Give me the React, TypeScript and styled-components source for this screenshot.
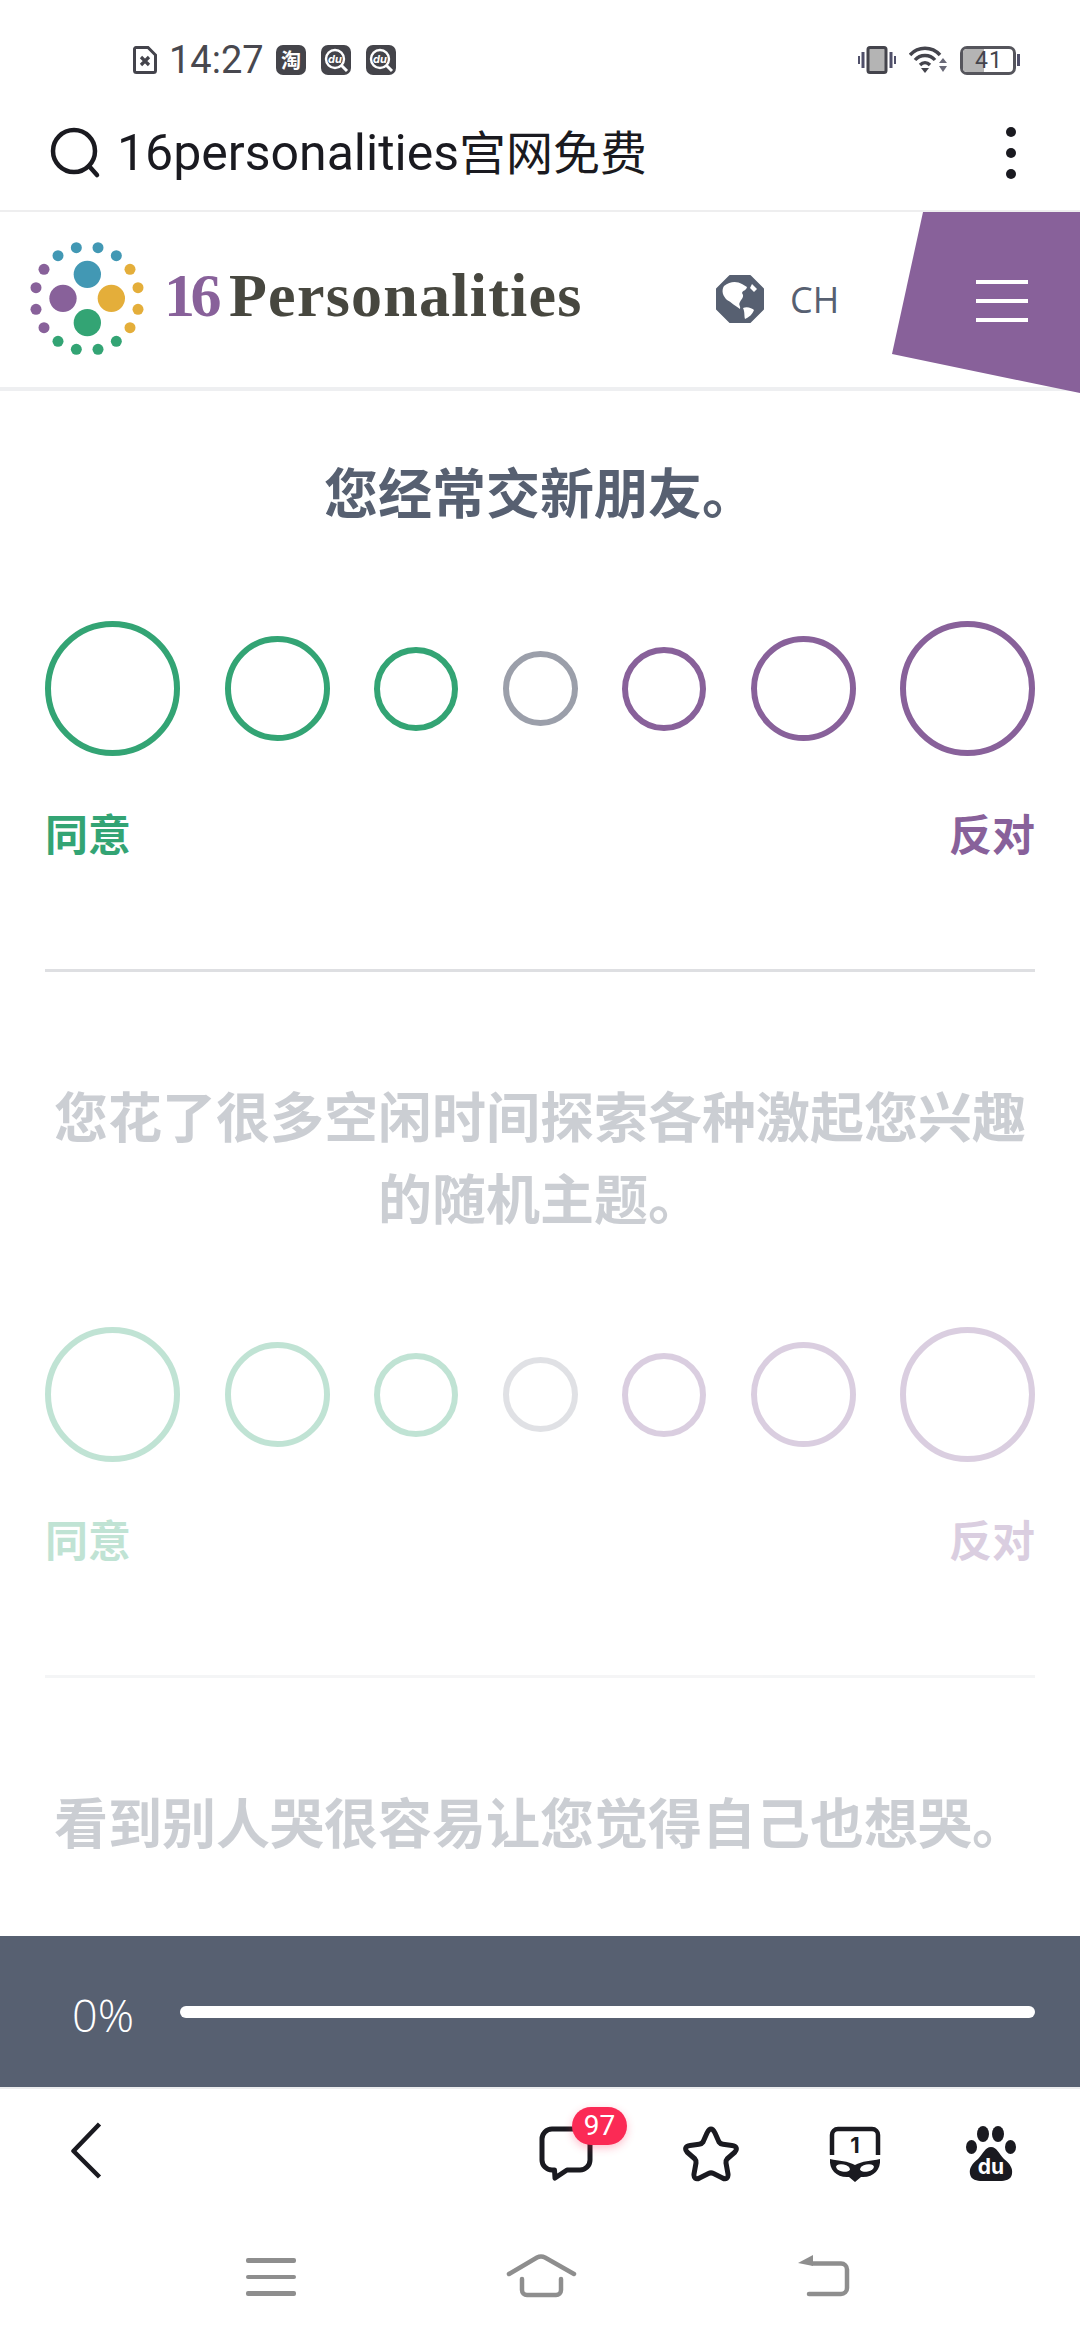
import styled, { createGlobalStyle } from 'styled-components'

const GREEN = '#33a474'
const PURPLE = '#88619a'
const NEUTRAL = '#9b9faa'
const SLATE = '#576071'
const INK = '#1a1a20'

const GlobalStyle = createGlobalStyle`
  html, body {
    margin: 0;
    padding: 0;
    background: #fff;
  }
  body {
    font-family: Inter, "Noto Sans CJK SC", sans-serif;
  }
  * {
    box-sizing: border-box;
  }
`

type CircleSpec = { size: number; color: string }

const scale: CircleSpec[] = [
  { size: 135, color: GREEN },
  { size: 105, color: GREEN },
  { size: 84, color: GREEN },
  { size: 75, color: NEUTRAL },
  { size: 84, color: PURPLE },
  { size: 105, color: PURPLE },
  { size: 135, color: PURPLE },
]

const questions = [
  { text: '您经常交新朋友。', faded: false, last: false },
  { text: '您花了很多空闲时间探索各种激起您兴趣的随机主题。', faded: true, last: false },
  { text: '看到别人哭很容易让您觉得自己也想哭。', faded: true, last: true },
]

const logoDots = [
  { c: '#4298b4', at: [[197, 82], [262, 82], [142, 106], [317, 106]] },
  { c: '#e4ae3a', at: [[358, 147], [382, 202], [382, 267], [358, 322]] },
  { c: GREEN, at: [[317, 363], [262, 387], [197, 387], [142, 363]] },
  { c: PURPLE, at: [[100, 322], [76, 267], [76, 202], [100, 147]] },
]

function Logo() {
  return (
    <LogoWrap>
      <svg width="124" height="124" viewBox="40 50 372 372">
        {logoDots.map((g) =>
          g.at.map(([x, y]) => <circle key={`${x}-${y}`} cx={x} cy={y} r="16.5" fill={g.c} />),
        )}
        <circle cx="230" cy="162" r="41" fill="#4298b4" />
        <circle cx="157" cy="234" r="41" fill={PURPLE} />
        <circle cx="302" cy="234" r="41" fill="#e4ae3a" />
        <circle cx="230" cy="307" r="41" fill={GREEN} />
      </svg>
      <Wordmark>
        <WordNumber>16</WordNumber>
        <WordName>Personalities</WordName>
      </Wordmark>
    </LogoWrap>
  )
}

function Globe() {
  return (
    <svg width="48" height="48" viewBox="0 0 48 48">
      <path d="M14 1 H34 L47 14 V34 L34 47 H14 L1 34 V14 Z" fill={SLATE} stroke={SLATE} strokeWidth="2" strokeLinejoin="round" />
      <path
        d="M8 11 C14 6 21 6 26 9 L31 12 C30 16 27 15 26 18 C29 22 25 24 24 27 C22 30 25 31 24 34 C19 31 15 27 11 25 C7 21 5 16 8 11 Z"
        fill="#fff"
      />
      <path d="M27 33 C31 31 36 33 38 35 C36 40 33 42 29 44 C28 41 29 37 27 33 Z" fill="#fff" />
      <path d="M36 9 L41 14 L38 17 L34 13 Z" fill="#fff" />
    </svg>
  )
}

function SearchIcon() {
  return (
    <svg width="52" height="52" viewBox="0 0 52 52" fill="none" stroke={INK} strokeWidth="4.5" strokeLinecap="round">
      <circle cx="24" cy="24" r="21" />
      <path d="M39 39 L47 48" />
    </svg>
  )
}

function SimIcon() {
  return (
    <svg width="24" height="28" viewBox="0 0 24 28" fill="none">
      <path d="M3 1.5 H15 L22.5 9 V24.5 A2 2 0 0 1 20.5 26.5 H3.5 A2 2 0 0 1 1.5 24.5 V3 A1.5 1.5 0 0 1 3 1.5 Z" stroke="#44444c" strokeWidth="3" />
      <path d="M8 11 L16 19 M16 11 L8 19" stroke="#44444c" strokeWidth="3.2" />
    </svg>
  )
}

function DuBadge() {
  return (
    <AppBadge>
      <svg width="30" height="30" viewBox="0 0 30 30">
        <circle cx="14" cy="14" r="9" fill="none" stroke="#fff" strokeWidth="2.4" />
        <path d="M20 20 L26 26" stroke="#fff" strokeWidth="3" />
        <text x="14" y="18" textAnchor="middle" fontSize="11" fontStyle="italic" fontFamily="Inter, sans-serif" fill="#fff">
          du
        </text>
      </svg>
    </AppBadge>
  )
}

function VibrateIcon() {
  return (
    <svg width="38" height="28" viewBox="0 0 38 28">
      <rect x="10" y="1.5" width="18" height="25" rx="2" fill="#b4b4b4" stroke="#44444c" strokeWidth="3" />
      <path d="M5 6 V22 M33 6 V22" stroke="#50506a" strokeWidth="3" />
      <path d="M1 10 V18 M37 10 V18" stroke="#50506a" strokeWidth="2" />
    </svg>
  )
}

function WifiIcon() {
  return (
    <svg width="38" height="28" viewBox="0 0 38 28" fill="none" stroke="#44444c" strokeWidth="3.4">
      <path d="M1 9 C9 0 23 0 31 9" />
      <path d="M6 14 C11 8 21 8 26 14" />
      <path d="M11 19 C14 16 18 16 21 19" />
      <path d="M12 22 H20 L16 27 Z" fill="#44444c" stroke="none" />
      <path d="M30 17 L34 12 L38 17 Z M30 20 H38 L34 26 Z" fill="#6a6a78" stroke="none" />
    </svg>
  )
}

function Battery() {
  return (
    <BatteryBody>
      <BatteryCase>
        <BatteryFill />
        <BatteryLevel>41</BatteryLevel>
      </BatteryCase>
      <BatteryTip />
    </BatteryBody>
  )
}

function ChatIcon() {
  return (
    <svg width="54" height="56" viewBox="0 0 54 56" fill="none" stroke={INK} strokeWidth="5" strokeLinejoin="round">
      <path d="M13 3 H41 A10 10 0 0 1 51 13 V34 A10 10 0 0 1 41 44 H28 L16 52 L15.500 44 H13 A10 10 0 0 1 3 34 V13 A10 10 0 0 1 13 3 Z" />
    </svg>
  )
}

function StarIcon() {
  return (
    <svg width="56" height="56" viewBox="0 0 56 56" fill="none" stroke={INK} strokeWidth="5" strokeLinejoin="round">
      <path d="M28 3 C30 3 31 5 32 7 L36 16 C37 17.500 38 18 40 18.300 L49 19.500 C53.500 20 54.500 23 52 26 L44 33 C43 34 43 35.500 43 37 L45 48 C45.500 52 43 54 39.500 52 L30.500 47.500 C28.500 46.500 27.500 46.500 25.500 47.500 L16.500 52 C13 54 10.500 52 11 48 L13 37 C13 35.500 13 34 12 33 L4 26 C1.500 23 2.500 20 7 19.500 L16 18.300 C18 18 19 17.500 20 16 L24 7 C25 5 26 3 28 3 Z" />
    </svg>
  )
}

function IncognitoIcon() {
  return (
    <svg width="52" height="56" viewBox="0 0 52 56">
      <path d="M3 29 V9 A6 6 0 0 1 9 3 H43 A6 6 0 0 1 49 9 V29" fill="none" stroke={INK} strokeWidth="4.5" />
      <text x="26" y="27" textAnchor="middle" fontSize="22" fontWeight="700" fontFamily="Inter, sans-serif" fill={INK}>
        1
      </text>
      <path d="M1 33 C10 35 19 35 26 39 C33 35 42 35 51 33 C52 44 44 52 32 51 L26 56 L20 51 C8 52 0 44 1 33 Z" fill={INK} />
      <ellipse cx="14" cy="42" rx="7" ry="3.500" fill="#fff" transform="rotate(12 14 42)" />
      <ellipse cx="38" cy="42" rx="7" ry="3.500" fill="#fff" transform="rotate(-12 38 42)" />
    </svg>
  )
}

function BaiduIcon() {
  return (
    <BaiduSlot>
      <svg width="50" height="55" viewBox="0 0 50 55">
        <ellipse cx="17" cy="8" rx="6" ry="8" fill={INK} />
        <ellipse cx="32" cy="8" rx="6" ry="8" fill={INK} />
        <ellipse cx="5.500" cy="21" rx="5.500" ry="7" fill={INK} />
        <ellipse cx="44.500" cy="21" rx="5.500" ry="7" fill={INK} />
        <path d="M25 21 C31 21 33 28 38 33 C44 38 47 42 46 48 C45 54 39 55 34 55 H16 C11 55 5 54 4 48 C3 42 6 38 12 33 C17 28 19 21 25 21 Z" fill={INK} />
        <text x="25" y="48" textAnchor="middle" fontSize="21" fontWeight="700" fontFamily="Inter, sans-serif" fill="#fff">
          du
        </text>
      </svg>
    </BaiduSlot>
  )
}

function NavHome() {
  return (
    <NavHomeSlot>
      <svg width="72" height="46" viewBox="0 0 72 46" fill="none" stroke="#8e8e8e" strokeWidth="4.5" strokeLinecap="round">
        <path d="M3 20 L31 3.500 Q35 1.500 39 3.500 L68 20" />
        <path d="M16 25 V36 A5 5 0 0 0 21 41 H50 A5 5 0 0 0 55 36 V25" />
      </svg>
    </NavHomeSlot>
  )
}

function NavBack() {
  return (
    <svg width="52" height="44" viewBox="0 0 52 44" fill="none" stroke="#8e8e8e" strokeWidth="4.5" strokeLinecap="round">
      <path d="M15 9.500 H43 A6 6 0 0 1 49 15.500 V34 A6 6 0 0 1 43 40 H11" />
      <path d="M0 9 L15 1 V12 Z" fill="#8e8e8e" stroke="none" />
    </svg>
  )
}

function App() {
  return (
    <Screen>
      <GlobalStyle />
      <StatusBar>
        <StatusLeft>
          <SimIcon />
          <Clock>14:27</Clock>
          <AppBadges>
            <AppBadge>淘</AppBadge>
            <DuBadge />
            <DuBadge />
          </AppBadges>
        </StatusLeft>
        <StatusRight>
          <VibrateIcon />
          <WifiIcon />
          <Battery />
        </StatusRight>
      </StatusBar>

      <AddressBar>
        <SearchIcon />
        <AddressText>
          <AddressLatin>16personalities</AddressLatin>宫网免费
        </AddressText>
        <MoreButton>
          <Dot />
          <Dot />
          <Dot />
        </MoreButton>
      </AddressBar>

      <SiteHeader>
        <Logo />
        <LanguagePicker>
          <Globe />
          <LanguageCode>CH</LanguageCode>
        </LanguagePicker>
        <MenuFlag>
          <MenuLine />
          <MenuLine />
          <MenuLine />
        </MenuFlag>
      </SiteHeader>

      <Main>
        {questions.map((q) => (
          <QuestionBlock key={q.text} $faded={q.faded} $last={q.last}>
            <QuestionText>{q.text}</QuestionText>
            {!q.last && (
              <>
                <ScaleRow>
                  {scale.map((c, i) => (
                    <ScaleCircle key={i} $size={c.size} $color={c.color} />
                  ))}
                </ScaleRow>
                <LabelRow>
                  <ScaleLabel $color={GREEN}>同意</ScaleLabel>
                  <ScaleLabel $color={PURPLE}>反对</ScaleLabel>
                </LabelRow>
              </>
            )}
          </QuestionBlock>
        ))}
      </Main>

      <ProgressBar>
        <ProgressValue>0%</ProgressValue>
        <ProgressTrack />
      </ProgressBar>

      <BrowserBar>
        <BackChevron>
          <svg width="32" height="58" viewBox="0 0 32 58" fill="none" stroke={INK} strokeWidth="4.5" strokeLinejoin="round">
            <path d="M28.500 2 L2.500 29 L28.500 55" />
          </svg>
        </BackChevron>
        <BrowserActions>
          <ChatButton>
            <ChatIcon />
            <CountBadge>97</CountBadge>
          </ChatButton>
          <StarIcon />
          <IncognitoIcon />
          <BaiduIcon />
        </BrowserActions>
      </BrowserBar>

      <SystemNav>
        <NavMenu>
          <NavLine />
          <NavLine />
          <NavLine />
        </NavMenu>
        <NavHome />
        <NavBack />
      </SystemNav>
    </Screen>
  )
}

export default App

const Screen = styled.div`
  width: 1080px;
  height: 2340px;
  display: flex;
  flex-direction: column;
  overflow: hidden;
  background: #fff;
`
const StatusBar = styled.div`
  height: 100px;
  flex-shrink: 0;
  padding: 45px 60px 0 133px;
  display: flex;
  align-items: flex-start;
  justify-content: space-between;
`
const StatusLeft = styled.div`
  display: flex;
  align-items: center;
  height: 30px;
`
const Clock = styled.span`
  margin-left: 12px;
  width: 107px;
  font-family: Roboto, sans-serif;
  font-size: 38px;
  line-height: 30px;
  color: #48484f;
`
const AppBadges = styled.div`
  display: flex;
  gap: 15px;
`
const AppBadge = styled.span`
  width: 30px;
  height: 30px;
  border-radius: 7px;
  background: #44444a;
  color: #fff;
  font-family: "Noto Sans CJK SC", sans-serif;
  font-size: 20px;
  font-weight: 700;
  line-height: 30px;
  text-align: center;
  overflow: hidden;
  display: block;
  & > svg {
    display: block;
  }
`
const StatusRight = styled.div`
  display: flex;
  align-items: center;
  gap: 13px;
  height: 30px;
`
const BatteryBody = styled.div`
  display: flex;
  align-items: center;
  gap: 1px;
`
const BatteryCase = styled.div`
  position: relative;
  width: 56px;
  height: 29px;
  border: 3px solid #55555c;
  border-radius: 7px;
  overflow: hidden;
`
const BatteryFill = styled.div`
  width: 41%;
  height: 100%;
  background: #b4b4b4;
`
const BatteryLevel = styled.span`
  position: absolute;
  left: 12px;
  top: 0;
  font-family: Roboto, sans-serif;
  font-size: 23px;
  line-height: 23px;
  letter-spacing: 1px;
  color: #44444c;
`
const BatteryTip = styled.div`
  width: 3px;
  height: 12px;
  background: #50506a;
`
const AddressBar = styled.div`
  height: 112px;
  flex-shrink: 0;
  padding: 0 64px 4px 50px;
  display: flex;
  align-items: center;
  border-bottom: 2px solid #eeeeef;
`
const AddressText = styled.div`
  flex: 1;
  margin-left: 15px;
  font-family: Roboto, "Noto Sans CJK SC", sans-serif;
  font-size: 47px;
  line-height: 60px;
  color: ${INK};
  white-space: nowrap;
`
const AddressLatin = styled.span`
  font-size: 50px;
`
const MoreButton = styled.div`
  display: flex;
  flex-direction: column;
  gap: 11px;
`
const Dot = styled.span`
  width: 10px;
  height: 10px;
  border-radius: 50%;
  background: ${INK};
`
const SiteHeader = styled.div`
  height: 179px;
  flex-shrink: 0;
  padding-left: 24px;
  display: flex;
  align-items: flex-start;
  border-bottom: 4px solid #eeeff1;
`
const LogoWrap = styled.div`
  display: flex;
  align-items: center;
  width: 692px;
  height: 174px;
  & > svg {
    flex-shrink: 0;
  }
`
const Wordmark = styled.div`
  margin: 0 0 8px 16px;
  display: flex;
  align-items: baseline;
  font-family: "Liberation Serif", serif;
  font-size: 62px;
  font-weight: 700;
  line-height: 70px;
  white-space: nowrap;
`
const WordNumber = styled.span`
  color: ${PURPLE};
  letter-spacing: -4.5px;
  margin-right: 12px;
`
const WordName = styled.span`
  color: #47473f;
  letter-spacing: 1.25px;
`
const LanguagePicker = styled.div`
  display: flex;
  align-items: center;
  gap: 26px;
  height: 174px;
  width: 176px;
`
const LanguageCode = styled.span`
  font-family: "Open Sans", sans-serif;
  font-size: 36px;
  color: ${SLATE};
`
const MenuFlag = styled.div`
  width: 188px;
  height: 181px;
  flex-shrink: 0;
  margin-bottom: -6px;
  padding: 68px 0 0 84px;
  display: flex;
  flex-direction: column;
  gap: 15px;
  background: ${PURPLE};
  clip-path: polygon(31px 0, 100% 0, 100% 100%, 0 142px);
`
const MenuLine = styled.span`
  width: 52px;
  height: 4px;
  background: #fff;
`
const Main = styled.main`
  flex: 1;
  min-height: 0;
  overflow: hidden;
  padding: 63px 45px 0;
`
const QuestionBlock = styled.section<{ $faded: boolean; $last: boolean }>`
  opacity: ${(props) => (props.$faded ? 0.3 : 1)};
  padding-bottom: ${(props) => (props.$last ? 0 : '104px')};
  margin-bottom: ${(props) => (props.$last ? 0 : '106px')};
  border-bottom: ${(props) => (props.$last ? 'none' : '3px solid #dedfe2')};
`
const QuestionText = styled.h2`
  margin: 0;
  font-family: Inter, "Noto Sans CJK SC", sans-serif;
  font-size: 54px;
  font-weight: 700;
  line-height: 82px;
  text-align: center;
  color: ${SLATE};
`
const ScaleRow = styled.div`
  margin-top: 85px;
  height: 135px;
  display: flex;
  align-items: center;
  justify-content: space-between;
`
const ScaleCircle = styled.div<{ $size: number; $color: string }>`
  width: ${(props) => props.$size}px;
  height: ${(props) => props.$size}px;
  flex-shrink: 0;
  border-radius: 50%;
  border: 6px solid ${(props) => props.$color};
`
const LabelRow = styled.div`
  margin-top: 49px;
  display: flex;
  justify-content: space-between;
`
const ScaleLabel = styled.span<{ $color: string }>`
  font-family: Inter, "Noto Sans CJK SC", sans-serif;
  font-size: 43px;
  font-weight: 700;
  line-height: 60px;
  color: ${(props) => props.$color};
`
const ProgressBar = styled.div`
  height: 151px;
  flex-shrink: 0;
  padding: 0 45px 0 72px;
  display: flex;
  align-items: center;
  gap: 46px;
  background: ${SLATE};
`
const ProgressValue = styled.span`
  width: 62px;
  font-family: "Open Sans", sans-serif;
  font-size: 45px;
  font-weight: 300;
  line-height: 56px;
  margin-top: 6px;
  color: #fff;
`
const ProgressTrack = styled.div`
  flex: 1;
  height: 12px;
  border-radius: 6px;
  background: #fff;
`
const BrowserBar = styled.div`
  height: 140px;
  flex-shrink: 0;
  padding: 37px 64px 0 71px;
  display: flex;
  align-items: flex-start;
  justify-content: space-between;
  border-top: 2px solid #ececee;
`
const BackChevron = styled.div`
  height: 58px;
  margin-top: -4px;
  & > svg {
    display: block;
  }
`
const BrowserActions = styled.div`
  display: flex;
  align-items: flex-start;
  gap: 90px;
  & > svg {
    display: block;
  }
`
const BaiduSlot = styled.div`
  margin-left: -5px;
  & > svg {
    display: block;
  }
`
const ChatButton = styled.div`
  position: relative;
  width: 54px;
  height: 56px;
  & > svg {
    display: block;
  }
`
const CountBadge = styled.span`
  position: absolute;
  left: 33px;
  top: -19px;
  width: 55px;
  height: 38px;
  border-radius: 19px;
  background: #fb2a55;
  box-shadow: 0 3px 8px rgba(251, 42, 85, 0.3);
  font-family: Roboto, sans-serif;
  font-size: 28px;
  line-height: 38px;
  text-align: center;
  color: #fff;
`
const SystemNav = styled.div`
  height: 113px;
  flex-shrink: 0;
  padding: 27px 0 0 246px;
  display: flex;
  align-items: flex-start;
`
const NavMenu = styled.div`
  display: flex;
  flex-direction: column;
  gap: 12px;
  padding-top: 4px;
`
const NavLine = styled.span`
  width: 50px;
  height: 4.5px;
  border-radius: 2px;
  background: #8e8e8e;
`
const NavHomeSlot = styled.div`
  margin: 0 220px 0 210px;
  & > svg {
    display: block;
  }
`
